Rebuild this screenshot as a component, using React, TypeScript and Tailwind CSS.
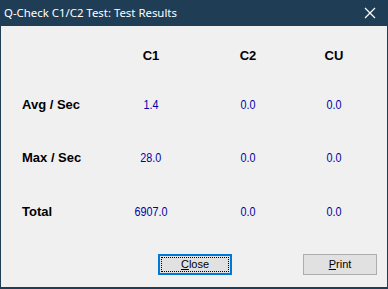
import React from "react";

const rows = [
  { label: "Avg / Sec", values: ["1.4", "0.0", "0.0"], mt: "mt-[29px]" },
  { label: "Max / Sec", values: ["28.0", "0.0", "0.0"], mt: "mt-[33px]" },
  { label: "Total", values: ["6907.0", "0.0", "0.0"], mt: "mt-[34px]" },
];

const cell = "flex items-center justify-center";

const App = () => {
  return (
    <div className="w-[388px] h-[289px] flex flex-col bg-[#203d56] overflow-hidden">
      {/* title bar */}
      <div className="h-[26px] shrink-0 flex items-center justify-between pl-[4px] pr-[10px]">
        <span className="text-white text-[11.4px] leading-none font-['Noto_Sans',sans-serif]">
          Q-Check C1/C2 Test: Test Results
        </span>
        <svg width="14" height="14" viewBox="0 0 14 14" className="mr-[1px]">
          <path d="M2 2 L12 12 M12 2 L2 12" stroke="white" strokeWidth="1.2" />
        </svg>
      </div>
      {/* body */}
      <div className="flex-1 mx-[1px] mb-[2px] bg-[#f0f0f0] flex flex-col font-['Liberation_Sans',Arial,sans-serif]">
        <div className="mt-[20px] h-[20px] grid grid-cols-[118px_64px_33px_64px_22px_64px] text-[13px] font-bold text-black">
          <div />
          <div className={cell}>C1</div>
          <div />
          <div className={cell}>C2</div>
          <div />
          <div className={cell}>CU</div>
        </div>
        {rows.map((r) => (
          <div
            key={r.label}
            className={`${r.mt} h-[20px] grid grid-cols-[118px_64px_33px_64px_22px_64px]`}
          >
            <div className="flex items-center pl-[21px] text-[13px] font-bold text-black">
              {r.label}
            </div>
            {r.values.map((v, i) => (
              <React.Fragment key={i}>
                {i > 0 && <div />}
                <div className={cell}>
                  <span className="text-[13px] text-[#0000a8] scale-x-[0.83]">{v}</span>
                </div>
              </React.Fragment>
            ))}
          </div>
        ))}
        <div className="mt-[32px] flex pl-[157px] text-[11px] text-black">
          <button className="w-[74px] h-[21px] border-2 border-[#0078d7] bg-[#e1e1e1] p-[1px]">
            <div className="w-full h-full border border-dotted border-black flex items-center justify-center">
              <span>
                <span className="underline">C</span>lose
              </span>
            </div>
          </button>
          <button className="ml-[71px] w-[74px] h-[21px] border border-[#adadad] bg-[#e1e1e1] flex items-center justify-center">
            <span>
              <span className="underline">P</span>rint
            </span>
          </button>
        </div>
      </div>
    </div>
  );
};

export default App;
